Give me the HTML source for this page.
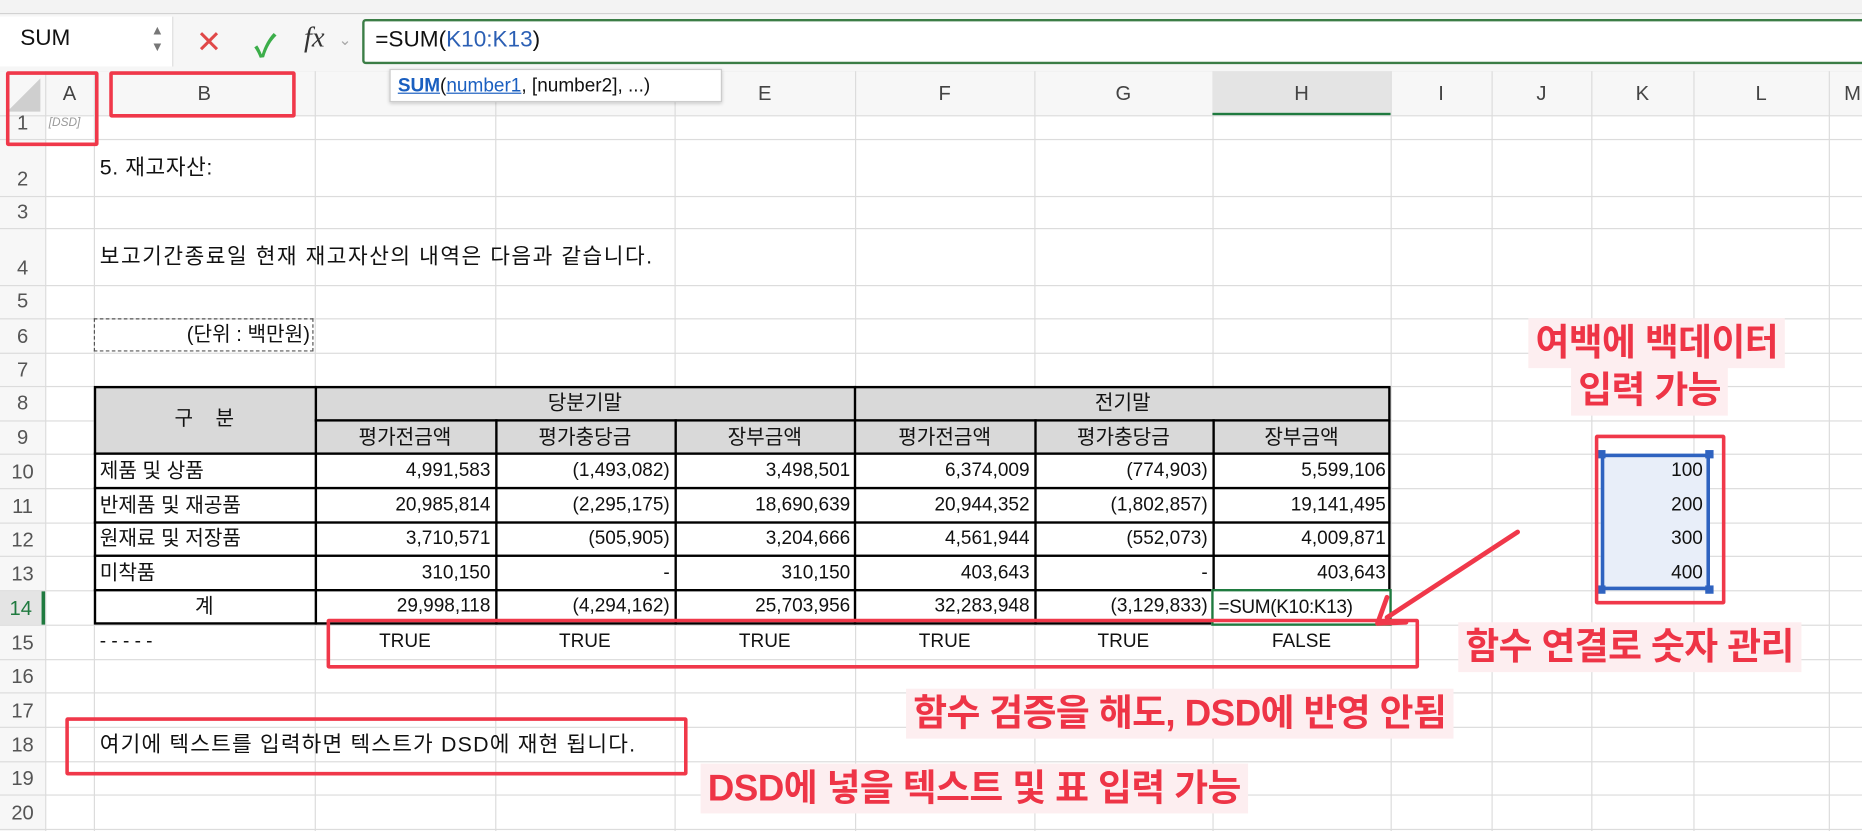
<!DOCTYPE html>
<html><head><meta charset="utf-8"><style>
html,body{margin:0;padding:0;width:1862px;height:830px;overflow:hidden;background:#fff}
#w{position:absolute;left:0;top:0;width:1568px;height:699px;transform:scale(1.1875);transform-origin:0 0;font-family:"Liberation Sans","Noto Sans CJK KR",sans-serif;color:#111}
.a{position:absolute}
.hl{position:absolute;left:0;width:1568px;height:1px;background:#dcdcdc}
.vl{position:absolute;top:60px;width:1px;height:640px;background:#dcdcdc}
.rn{position:absolute;left:0;width:38px;text-align:center;font-size:17px;color:#555}
.ch{position:absolute;top:60px;height:37px;line-height:37px;text-align:center;font-size:17px;color:#444}
.c{position:absolute;font-size:16px;line-height:28px;white-space:nowrap}
.k{font-size:17px}
.r{text-align:right;padding-right:4px;box-sizing:border-box}
.m{text-align:center}
.rb{position:absolute;border:3px solid #f0384a;border-radius:2px}
.co{position:absolute;color:#ee3446;font-weight:bold;font-size:31px;background:#fdeef0;padding:0 6px;line-height:42px;white-space:nowrap;letter-spacing:-0.5px}
</style></head><body><div id="w">
<div class="a" style="left:0;top:0;width:1568px;height:11px;background:#f3f3f3;border-bottom:1px solid #d0d0d0"></div>
<div class="a" style="left:0;top:12px;width:1568px;height:48px;background:#f6f6f6;border-bottom:1px solid #cfcfcf"></div>
<div class="a" style="left:0;top:14px;width:145px;height:42px;background:#fff;border-right:1px solid #ddd"></div>
<div class="a" style="left:17px;top:22px;font-size:19px">SUM</div>
<div class="a" style="left:127px;top:19px;font-size:11px;color:#777;line-height:14px">▲<br>▼</div>
<div class="a" style="left:165px;top:20px;font-size:26px;color:#e04848">✕</div>
<div class="a" style="left:214px;top:19px;font-size:26px;color:#3cae4a;font-weight:bold">✓</div>
<div class="a" style="left:256px;top:19px;font-size:24px;font-style:italic;font-family:'Liberation Serif',serif;color:#333">fx</div>
<div class="a" style="left:285px;top:26px;font-size:13px;color:#aaa">⌄</div>
<div class="a" style="left:305px;top:16px;width:1270px;height:34px;background:#fff;border:2px solid #3b7d46;border-radius:3px"></div>
<div class="a" style="left:316px;top:23px;font-size:19px">=SUM(<span style="color:#2b5fb4">K10:K13</span>)</div>
<div class="a" style="left:0;top:60px;width:1568px;height:37px;background:#f7f7f7"></div>
<div class="a" style="left:0;top:60px;width:38px;height:640px;background:#f7f7f7"></div>
<div class="hl" style="top:97px"></div><div class="hl" style="top:117px"></div><div class="hl" style="top:165px"></div><div class="hl" style="top:192px"></div><div class="hl" style="top:240px"></div><div class="hl" style="top:268px"></div><div class="hl" style="top:297px"></div><div class="hl" style="top:325px"></div><div class="hl" style="top:354px"></div><div class="hl" style="top:382px"></div><div class="hl" style="top:411px"></div><div class="hl" style="top:440px"></div><div class="hl" style="top:468px"></div><div class="hl" style="top:497px"></div><div class="hl" style="top:526px"></div><div class="hl" style="top:555px"></div><div class="hl" style="top:583px"></div><div class="hl" style="top:612px"></div><div class="hl" style="top:641px"></div><div class="hl" style="top:669px"></div><div class="hl" style="top:698px"></div>
<div class="vl" style="left:38px"></div><div class="vl" style="left:79px"></div><div class="vl" style="left:265px"></div><div class="vl" style="left:417px"></div><div class="vl" style="left:568px"></div><div class="vl" style="left:720px"></div><div class="vl" style="left:871px"></div><div class="vl" style="left:1021px"></div><div class="vl" style="left:1171px"></div><div class="vl" style="left:1256px"></div><div class="vl" style="left:1340px"></div><div class="vl" style="left:1426px"></div><div class="vl" style="left:1540px"></div>
<div class="a" style="left:6px;top:66px;width:0;height:0;border-left:28px solid transparent;border-bottom:28px solid #cfcfcf"></div>
<div class="ch" style="left:38px;width:41px">A</div><div class="ch" style="left:79px;width:186px">B</div><div class="ch" style="left:568px;width:152px">E</div><div class="ch" style="left:720px;width:151px">F</div><div class="ch" style="left:871px;width:150px">G</div><div class="ch" style="left:1021px;width:150px;background:#e4e4e4;border-bottom:2px solid #1f7a3f;height:35px">H</div><div class="ch" style="left:1171px;width:85px">I</div><div class="ch" style="left:1256px;width:84px">J</div><div class="ch" style="left:1340px;width:86px">K</div><div class="ch" style="left:1426px;width:114px">L</div><div class="ch" style="left:1540px;width:40px">M</div>
<div class="rn" style="top:94px">1</div><div class="rn" style="top:141px">2</div><div class="rn" style="top:169px">3</div><div class="rn" style="top:216px">4</div><div class="rn" style="top:244px">5</div><div class="rn" style="top:274px">6</div><div class="rn" style="top:302px">7</div><div class="rn" style="top:330px">8</div><div class="rn" style="top:359px">9</div><div class="rn" style="top:388px">10</div><div class="rn" style="top:417px">11</div><div class="rn" style="top:445px">12</div><div class="rn" style="top:474px">13</div><div class="rn" style="color:#1f7a3f;border-right:3px solid #1f7a3f;width:35px;background:#e4e4e4;height:28px;top:498px;line-height:30px">14</div><div class="rn" style="top:532px">15</div><div class="rn" style="top:560px">16</div><div class="rn" style="top:589px">17</div><div class="rn" style="top:618px">18</div><div class="rn" style="top:646px">19</div><div class="rn" style="top:675px">20</div>
<div class="a" style="left:328px;top:58px;width:280px;height:28px;background:#fff;border:1px solid #ccc;box-shadow:0 1px 3px rgba(0,0,0,.2);font-size:16px;line-height:28px;padding-left:6px;box-sizing:border-box"><b style="color:#1a5fc0;text-decoration:underline">SUM</b>(<span style="color:#1a5fc0;text-decoration:underline">number1</span>, [number2], ...)</div>
<div class="a" style="left:41px;top:98px;font-size:10px;font-style:italic;color:#999">[DSD]</div>
<div class="c" style="left:84px;top:127px;font-size:18px;letter-spacing:0.5px">5. 재고자산:</div>
<div class="c" style="left:84px;top:202px;font-size:18px;letter-spacing:1.3px">보고기간종료일 현재 재고자산의 내역은 다음과 같습니다.</div>
<div class="a" style="left:79px;top:268px;width:185px;height:28px;border:1px dashed #555;box-sizing:border-box"></div>
<div class="c r k" style="left:79px;top:268px;width:186px">(단위 : 백만원)</div>
<div class="a" style="left:79px;top:325px;width:1092px;height:57px;background:#d9d9d9"></div>
<div class="a" style="left:79px;top:325px;width:1092px;height:201px;border:2px solid #000;box-sizing:border-box"></div>
<div class="a" style="left:265px;top:325px;width:2px;height:201px;background:#000"></div>
<div class="a" style="left:417px;top:353px;width:2px;height:173px;background:#000"></div>
<div class="a" style="left:568px;top:353px;width:2px;height:173px;background:#000"></div>
<div class="a" style="left:719px;top:325px;width:2px;height:201px;background:#000"></div>
<div class="a" style="left:871px;top:353px;width:2px;height:173px;background:#000"></div>
<div class="a" style="left:1021px;top:353px;width:2px;height:173px;background:#000"></div>
<div class="a" style="left:265px;top:353px;width:906px;height:2px;background:#000"></div>
<div class="a" style="left:79px;top:381px;width:1092px;height:2px;background:#000"></div>
<div class="a" style="left:79px;top:410px;width:1092px;height:2px;background:#000"></div>
<div class="a" style="left:79px;top:439px;width:1092px;height:2px;background:#000"></div>
<div class="a" style="left:79px;top:467px;width:1092px;height:2px;background:#000"></div>
<div class="a" style="left:79px;top:496px;width:1092px;height:2px;background:#000"></div>
<div class="c m k" style="left:79px;top:339px;width:186px">구 &nbsp; &nbsp;분</div>
<div class="c m k" style="left:265px;top:326px;width:455px">당분기말</div>
<div class="c m k" style="left:720px;top:326px;width:451px">전기말</div>
<div class="c m k" style="left:265px;top:355px;width:152px">평가전금액</div><div class="c m k" style="left:417px;top:355px;width:151px">평가충당금</div><div class="c m k" style="left:568px;top:355px;width:152px">장부금액</div><div class="c m k" style="left:720px;top:355px;width:151px">평가전금액</div><div class="c m k" style="left:871px;top:355px;width:150px">평가충당금</div><div class="c m k" style="left:1021px;top:355px;width:150px">장부금액</div>
<div class="c k" style="left:84px;top:383px">제품 및 상품</div><div class="c k" style="left:84px;top:412px">반제품 및 재공품</div><div class="c k" style="left:84px;top:440px">원재료 및 저장품</div><div class="c k" style="left:84px;top:469px">미착품</div><div class="c m k" style="left:79px;top:497px;width:186px">계</div>
<div class="c r" style="left:265px;top:383px;width:152px">4,991,583</div><div class="c r" style="left:417px;top:383px;width:151px">(1,493,082)</div><div class="c r" style="left:568px;top:383px;width:152px">3,498,501</div><div class="c r" style="left:720px;top:383px;width:151px">6,374,009</div><div class="c r" style="left:871px;top:383px;width:150px">(774,903)</div><div class="c r" style="left:1021px;top:383px;width:150px">5,599,106</div>
<div class="c r" style="left:265px;top:412px;width:152px">20,985,814</div><div class="c r" style="left:417px;top:412px;width:151px">(2,295,175)</div><div class="c r" style="left:568px;top:412px;width:152px">18,690,639</div><div class="c r" style="left:720px;top:412px;width:151px">20,944,352</div><div class="c r" style="left:871px;top:412px;width:150px">(1,802,857)</div><div class="c r" style="left:1021px;top:412px;width:150px">19,141,495</div>
<div class="c r" style="left:265px;top:440px;width:152px">3,710,571</div><div class="c r" style="left:417px;top:440px;width:151px">(505,905)</div><div class="c r" style="left:568px;top:440px;width:152px">3,204,666</div><div class="c r" style="left:720px;top:440px;width:151px">4,561,944</div><div class="c r" style="left:871px;top:440px;width:150px">(552,073)</div><div class="c r" style="left:1021px;top:440px;width:150px">4,009,871</div>
<div class="c r" style="left:265px;top:469px;width:152px">310,150</div><div class="c r" style="left:417px;top:469px;width:151px">-</div><div class="c r" style="left:568px;top:469px;width:152px">310,150</div><div class="c r" style="left:720px;top:469px;width:151px">403,643</div><div class="c r" style="left:871px;top:469px;width:150px">-</div><div class="c r" style="left:1021px;top:469px;width:150px">403,643</div>
<div class="c r" style="left:265px;top:497px;width:152px">29,998,118</div><div class="c r" style="left:417px;top:497px;width:151px">(4,294,162)</div><div class="c r" style="left:568px;top:497px;width:152px">25,703,956</div><div class="c r" style="left:720px;top:497px;width:151px">32,283,948</div><div class="c r" style="left:871px;top:497px;width:150px">(3,129,833)</div>
<div class="a" style="left:1020px;top:496px;width:152px;height:31px;border:2px solid #1f7a3f;box-sizing:border-box;background:#fff"></div>
<div class="c" style="left:1026px;top:498px;font-size:16px;letter-spacing:-0.3px">=SUM(K10:K13)</div>
<div class="c" style="left:84px;top:527px">- - - - -</div>
<div class="c m" style="left:265px;top:527px;width:152px">TRUE</div><div class="c m" style="left:417px;top:527px;width:151px">TRUE</div><div class="c m" style="left:568px;top:527px;width:152px">TRUE</div><div class="c m" style="left:720px;top:527px;width:151px">TRUE</div><div class="c m" style="left:871px;top:527px;width:150px">TRUE</div><div class="c m" style="left:1021px;top:527px;width:150px">FALSE</div>
<div class="c" style="left:84px;top:613px;font-size:18px;letter-spacing:1px">여기에 텍스트를 입력하면 텍스트가 DSD에 재현 됩니다.</div>
<div class="a" style="left:1348px;top:382px;width:92px;height:115px;background:#e8eef9;border:3px solid #2f63c0;box-sizing:border-box"></div>
<div class="a" style="left:1345px;top:379px;width:7px;height:7px;background:#2f63c0"></div><div class="a" style="left:1436px;top:379px;width:7px;height:7px;background:#2f63c0"></div><div class="a" style="left:1345px;top:493px;width:7px;height:7px;background:#2f63c0"></div><div class="a" style="left:1436px;top:493px;width:7px;height:7px;background:#2f63c0"></div>
<div class="c r" style="left:1340px;top:383px;width:98px">100</div><div class="c r" style="left:1340px;top:412px;width:98px">200</div><div class="c r" style="left:1340px;top:440px;width:98px">300</div><div class="c r" style="left:1340px;top:469px;width:98px">400</div>
<div class="rb" style="left:5px;top:60px;width:72px;height:57px"></div>
<div class="rb" style="left:92px;top:60px;width:151px;height:33px"></div>
<div class="rb" style="left:275px;top:521px;width:914px;height:36px"></div>
<div class="rb" style="left:55px;top:604px;width:518px;height:43px"></div>
<div class="rb" style="left:1343px;top:366px;width:104px;height:137px"></div>
<svg class="a" style="left:0;top:0" width="1568" height="699"><line x1="1278" y1="448" x2="1168" y2="520" stroke="#f0384a" stroke-width="4" stroke-linecap="round"/><polyline points="1168,503 1160,525 1184,524" fill="none" stroke="#f0384a" stroke-width="4" stroke-linecap="round" stroke-linejoin="round"/></svg>
<div class="co" style="left:1287px;top:268px">여백에 백데이터</div>
<div class="co" style="left:1323px;top:308px">입력 가능</div>
<div class="co" style="left:1228px;top:524px">함수 연결로 숫자 관리</div>
<div class="co" style="left:763px;top:580px">함수 검증을 해도, DSD에 반영 안됨</div>
<div class="co" style="left:590px;top:643px">DSD에 넣을 텍스트 및 표 입력 가능</div>
</div></body></html>
